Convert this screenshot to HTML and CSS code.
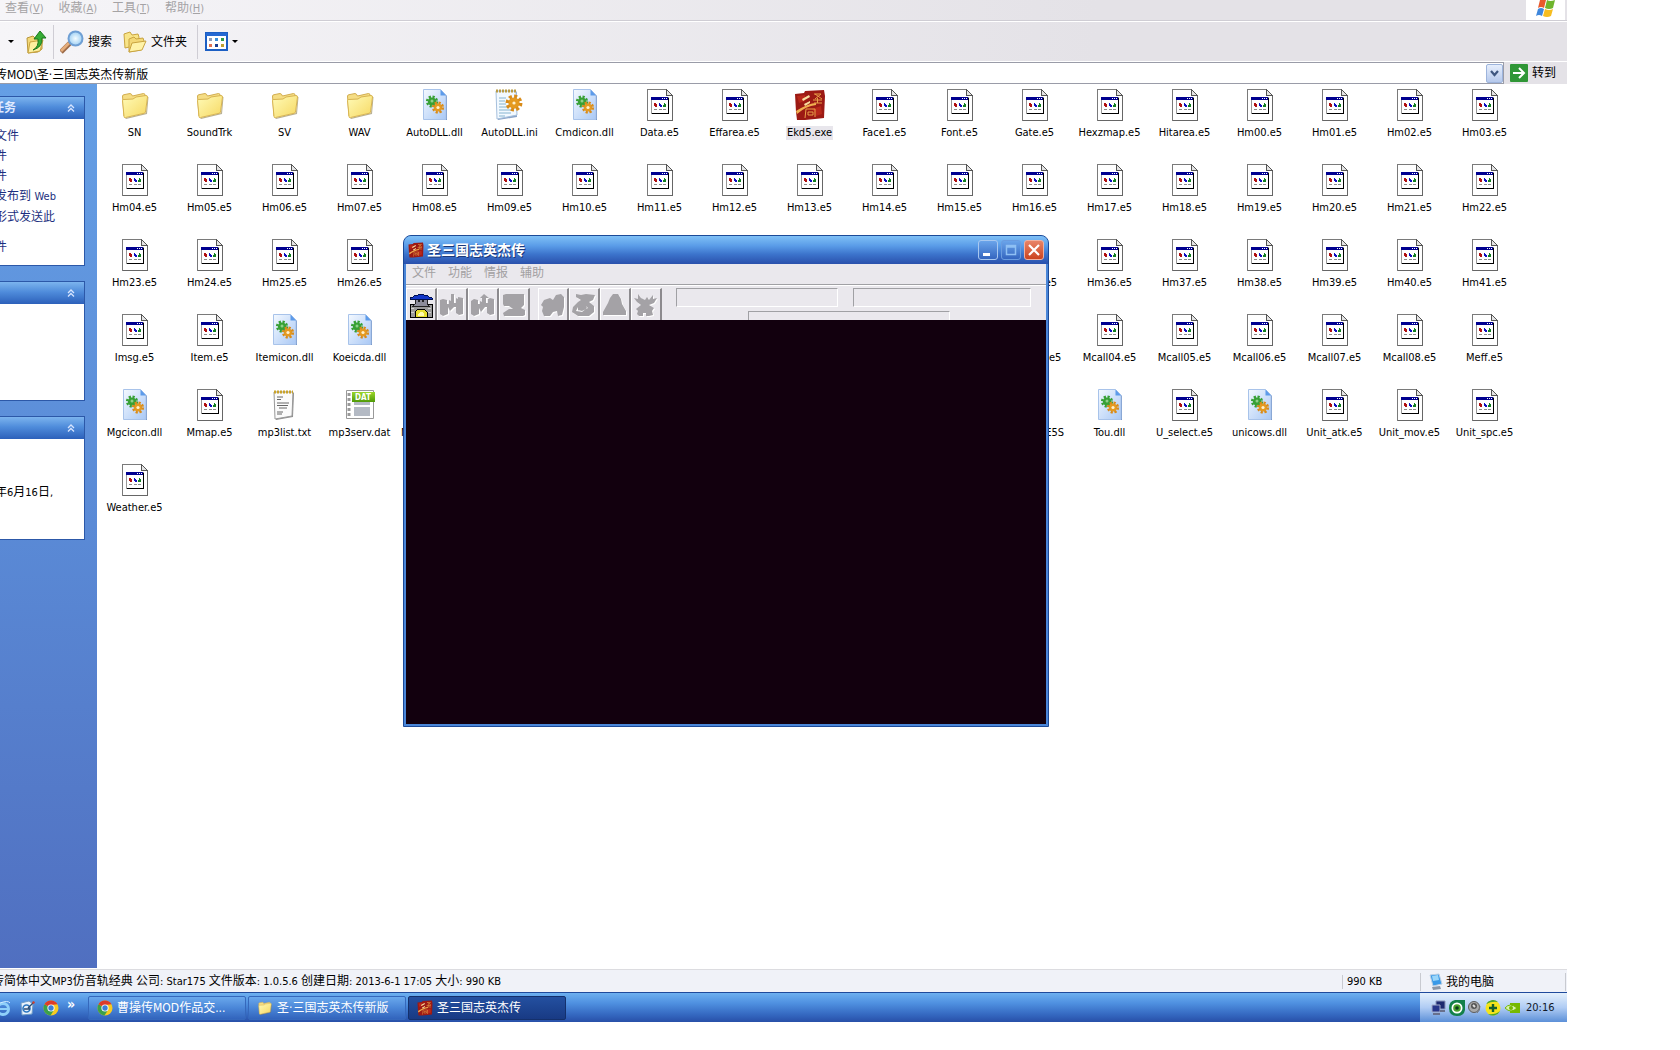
FILE: index.html
```html
<!DOCTYPE html>
<html lang="zh-CN">

<head>
    <meta charset="UTF-8">
    <title>圣·三国志英杰传新版</title>
    <link rel="stylesheet" href="styles.css">
</head>
<body>
<svg class="sprite" aria-hidden="true">
    <defs>
        <linearGradient id="gFolder" x1="0" y1="0" x2="1" y2="1">
            <stop offset="0" stop-color="#fffbb8"/><stop offset="1" stop-color="#f6d862"/>
        </linearGradient>
        <linearGradient id="gDll" x1="0" y1="0" x2="1" y2="1">
            <stop offset="0" stop-color="#f4f9ff"/><stop offset="1" stop-color="#a9c8f5"/>
        </linearGradient>
        <linearGradient id="gDat" x1="0" y1="0" x2="0" y2="1">
            <stop offset="0" stop-color="#9ad62c"/><stop offset="1" stop-color="#4f9a08"/>
        </linearGradient>
        <radialGradient id="gGlass">
            <stop offset="0" stop-color="#f4fcff"/><stop offset="1" stop-color="#9fd0f4"/>
        </radialGradient>
    </defs>
    <symbol id="i-folder" viewBox="0 0 32 32">
        <path d="M6 29l21-5 1.500-16 1 0-1.500 17-21 5z" fill="#8a7b4a" opacity=".6"/>
        <path d="M3.500 7q0-1 1.500-1.300l6-1.200q1.500 0 2.500 2.500l11-2.500q1.500 0 1.500 1.500l1 3-22 18z" fill="#f5dd84" stroke="#d2ad50"/>
        <path d="M3.500 11.500q0-1 1.500-1l9-0.500 3-2 10-1.500q1.500 0 1.500 1.500l-2 15q0 1-1.500 1.300L6.500 28.500q-1.500 0.500-1.500-1z" fill="url(#gFolder)" stroke="#d8b450"/>
    </symbol>
    <symbol id="i-e5" viewBox="0 0 32 32" shape-rendering="crispEdges">
        <path d="M3.500 0.500h19l6 6v25h-25z" fill="#fff" stroke="#7a7a7a"/>
        <path d="M28 7v24H4" fill="none" stroke="#666"/>
        <path d="M22.500 0.500v6h6z" fill="#e4e4e4" stroke="#555"/>
        <path d="M7 8h17v16H7z" fill="#fff" stroke="#999"/>
        <path d="M7 8h17v3H7z" fill="#000090"/>
        <path d="M18 9h1v1h-1zM20 9h1v1h-1zM22 9h1v1h-1z" fill="#fff"/>
        <path d="M24 9h1v16H8v-1h16z" fill="#000"/>
        <path d="M10 14h2v1h1v3h-2v-1h-1z" fill="#b01010"/>
        <path d="M15 14h1v1h1v1h1v2h-2v-1h-1z" fill="#1010c0"/>
        <path d="M20 14h1v1h1v3h-3v-2h1z" fill="#108020"/>
        <path d="M10 20h3v1h-3zM15 20h3v1h-3zM19 20h3v1h-3z" fill="#8a8a8a"/>
    </symbol>
    <symbol id="i-gear" viewBox="-8 -8 16 16">
        <circle r="5"/>
        <circle r="6" fill="none" stroke="currentColor" stroke-width="3" stroke-dasharray="2.700 2"/>
    </symbol>
    <symbol id="i-dll" viewBox="0 0 32 32">
        <path d="M5 1h17l6 6v24H5z" fill="#6c8cc0"/>
        <path d="M4.500 0.500h17l5.500 6v24h-22.500z" fill="url(#gDll)" stroke="#a8c3ea"/>
        <path d="M21.500 0.500v6h5.500z" fill="#5d9bea"/>
        <use href="#i-gear" x="6" y="6" width="14" height="13" fill="#37a035" color="#37a035"/>
        <circle cx="13" cy="12" r="1.500" fill="#8fd088"/>
        <use href="#i-gear" x="12" y="12" width="14" height="13" fill="#e59a20" color="#d98b18"/>
        <circle cx="19" cy="18.500" r="1.600" fill="#fff1cc"/>
    </symbol>
    <symbol id="i-txt" viewBox="0 0 32 32">
        <path d="M6 4h19l-1 24-17 3z" fill="#909090"/>
        <path d="M5 3h19l-1 24-17 3z" fill="#fbfbfb" stroke="#999"/>
        <path d="M5 3h19" stroke="#caa32a" stroke-width="3" stroke-dasharray="2 1"/>
        <path d="M8 8h6M8 10.500h4M8 14h12M8 16.500h11M10 19h8M8 23h6M8 25h5" stroke="#666" fill="none"/>
    </symbol>
    <symbol id="i-ini" viewBox="0 0 32 32">
        <path d="M3 3h20v25l-19 3z" fill="#8ba4c8"/>
        <path d="M2 2h20l1 24-20 4z" fill="#f2f9ff" stroke="#a6c0dd"/>
        <path d="M2 2h20" stroke="#b99b45" stroke-width="3" stroke-dasharray="2 1"/>
        <path d="M5 9h7M5 12h6M5 15h7M5 18h9M5 21h14M5 24h12M5 27h6" stroke="#86b4d0" fill="none"/>
        <use href="#i-gear" x="11" y="5" width="18" height="18" fill="#e59a20" color="#d98b18"/>
        <circle cx="20" cy="14" r="1.600" fill="#fff1cc"/>
    </symbol>
    <symbol id="i-dat" viewBox="0 0 32 32">
        <path d="M2.500 1.500h27v28h-27z" fill="#fff" stroke="#999"/>
        <path d="M5 4v25" stroke="#999" stroke-width="3" stroke-dasharray="3 2"/>
        <path d="M10 13h16v3H10zM10 18h16v9H10z" fill="#b4bac4"/>
        <path d="M8 3h23v10H8z" fill="url(#gDat)"/>
        <text x="19" y="11" text-anchor="middle" font-family="DejaVu Sans Condensed" font-weight="bold" font-size="8" fill="#fff">DAT</text>
    </symbol>
    <symbol id="i-exe" viewBox="0 0 32 32">
        <path d="M1 5l9-1 1-2 19-1 1 6-1 22-9 1-10 1-8 0-1-8z" fill="#9c1a14"/>
        <path d="M3 7l8-1 0 6-6 2zM18 20l9-3 1 8-6 2z" fill="#b8281a"/>
        <path d="M2 22q13-8 20-8l0 2q-10 1-19 9z" fill="#f0b050"/>
        <path d="M8 10l7-4 1 2-7 4zM10 15l6-3v2l-5 3z" fill="#f8e0a0"/>
        <path d="M20 5h7l-6 5M21 5l7 5M19 11h9M23.500 9v5M20 14h8M12 20l-1 9M12 20h9l0 8M14 23h5v3h-5z" fill="none" stroke="#e8a048" stroke-width="1"/>
    </symbol>
    <symbol id="i-chrome" viewBox="0 0 16 16">
        <circle cx="8" cy="8" r="7.500" fill="#f6cb22"/>
        <path d="M8 8L1.500 4.300A7.500 7.500 0 0 0 7.500 15.500L11 10z" fill="#3aa04b"/>
        <path d="M8 8L1.500 4.300A7.500 7.500 0 0 1 14.500 4.300L8 5z" fill="#dc3b2b"/>
        <circle cx="8" cy="8" r="3.600" fill="#fff"/>
        <circle cx="8" cy="8" r="2.700" fill="#3c7fd6"/>
    </symbol>
    <symbol id="i-chev" viewBox="0 0 8 8">
        <path d="M1 4l3-3 3 3M1 7.500l3-3 3 3" fill="none" stroke="#d6e4ff" stroke-width="1.300"/>
    </symbol>
</svg>

<div class="explorer">
    <nav class="menubar">
        <button class="menu">查看<span class="lat">(<u>V</u>)</span></button>
        <button class="menu">收藏<span class="lat">(<u>A</u>)</span></button>
        <button class="menu">工具<span class="lat">(<u>T</u>)</span></button>
        <button class="menu">帮助<span class="lat">(<u>H</u>)</span></button>
        <div class="flag">
            <svg width="20" height="18" viewBox="0 0 20 18">
                <path d="M4 0q3-2 6 0L8 8q-3-2-6 0z" fill="#e8592b"/>
                <path d="M11 0q3 2 8 0l-2 8q-4 2-8 0z" fill="#6fb52c"/>
                <path d="M2 9q3-2 6 0l-2 7q-3-2-6 0z" fill="#3f87dc"/>
                <path d="M9 9q4 2 8 0l-2 7q-4 2-8 0z" fill="#f6bd20"/>
            </svg>
        </div>
    </nav>

    <div class="toolbar">
        <button class="tool drop" aria-label="前进"><i class="tri"></i></button>
        <button class="tool up" aria-label="向上">
            <svg width="21" height="24" viewBox="0 0 21 24">
                <path d="M1 8l6-2 2 2 7-1v12l-4 3-10 1z" fill="#f3d877" stroke="#b8963a"/>
                <path d="M4 12l13-2-3 11-12 2z" fill="#fdf0a0" stroke="#c9a440"/>
                <path d="M7 20q6-3 5-11H8l6-8 6 7h-4q1 9-9 12z" fill="#36ad35" stroke="#1b761c"/>
            </svg>
        </button>
        <button class="tool search">
            <svg width="24" height="24" viewBox="0 0 24 24">
                <path d="M1 22l9-9" stroke="#9c6a48" stroke-width="5"/>
                <path d="M1 21l8-8" stroke="#e5ad7c" stroke-width="3"/>
                <circle cx="15.500" cy="8.500" r="7" fill="url(#gGlass)" stroke="#6f9fd4" stroke-width="2"/>
            </svg>
            搜索
        </button>
        <button class="tool folders">
            <svg width="24" height="22" viewBox="0 0 24 22">
                <path d="M1 3l6-2 2 3 6-1 1 3-1 8-13 3z" fill="#f8e488" stroke="#c9a440"/>
                <path d="M6 8l5-2 2 2 7-1 1 3-3 9-12 2z" fill="#f3d877" stroke="#c9a440"/>
                <path d="M9 12l14-2-4 9-13 2z" fill="#fff3a8" stroke="#c9a440"/>
            </svg>
            文件夹
        </button>
        <button class="tool views" aria-label="查看">
            <svg width="23" height="19" viewBox="0 0 23 19" shape-rendering="crispEdges">
                <path d="M1 1h21v17H1z" fill="#fff" stroke="#1c5fc4" stroke-width="2"/>
                <path d="M1 1h21v3H1z" fill="#2468d2"/>
                <path d="M4 6h3v3H4z" fill="#8c9ab8"/><path d="M10 6h3v3h-3z" fill="#3b8fd8"/><path d="M16 6h3v3h-3z" fill="#2f9a48"/>
                <path d="M4 12h3v3H4z" fill="#e07050"/><path d="M10 12h3v3h-3z" fill="#1c3e90"/><path d="M16 12h3v3h-3z" fill="#c0a030"/>
            </svg>
            <i class="tri"></i>
        </button>
    </div>

    <form class="address">
        <div class="combo">
            <input type="text" aria-label="地址" value="传MOD\圣·三国志英杰传新版">
            <button type="button" class="combo-btn" aria-label="展开">
                <svg width="9" height="7" viewBox="0 0 9 7"><path d="M1 1l3.500 4L8 1" fill="none" stroke="#3f5780" stroke-width="2.200"/></svg>
            </button>
        </div>
        <button type="button" class="go">
            <svg width="18" height="18" viewBox="0 0 18 18">
                <rect width="18" height="18" rx="1" fill="#2f9636"/>
                <path d="M3 9h11M9 4l5 5-5 5" fill="none" stroke="#fff" stroke-width="2"/>
            </svg>
            转到
        </button>
    </form>

    <div class="main">
        <aside class="side">
            <section class="panel tasks">
                <h2>任务<svg width="8" height="8"><use href="#i-chev"/></svg></h2>
                <div class="panel-body">
                    <a href="#">文件</a>
                    <a href="#">件</a>
                    <a href="#">件</a>
                    <a href="#">发布到 <span class="lat">Web</span></a>
                    <a href="#" class="two">形式发送此</a>
                    <a href="#">件</a>
                </div>
            </section>
            <section class="panel places">
                <h2><svg width="8" height="8"><use href="#i-chev"/></svg></h2>
                <div class="panel-body"></div>
            </section>
            <section class="panel details">
                <h2><svg width="8" height="8"><use href="#i-chev"/></svg></h2>
                <div class="panel-body"><p>年<span class="lat">6</span>月<span class="lat">16</span>日<span class="lat">,</span></p></div>
            </section>
        </aside>
        <div class="files" id="files"></div>
    </div>

    <footer class="status">
        <p class="info">传简体中文<span class="lat">MP3</span>仿音轨经典<span class="lat"> </span>公司<span class="lat">: Star175 </span>文件版本<span class="lat">: 1.0.5.6 </span>创建日期<span class="lat">: 2013-6-1 17:05 </span>大小<span class="lat">: 990 KB</span></p>
        <p class="size">990 KB</p>
        <p class="zone">
            <svg width="14" height="18" viewBox="0 0 14 18">
                <path d="M1 2l9-1 3 10-9 2z" fill="#3a9ae8" stroke="#bcd0e4"/>
                <path d="M3 3l6-1 1 5-6 1z" fill="#9ad6fa"/>
                <path d="M3 14l8-1 1 3-8 1z" fill="#8d97a6"/>
            </svg>
            我的电脑
        </p>
    </footer>
</div>

<div class="taskbar">
    <div class="quick">
        <svg class="ie" width="11" height="16" viewBox="5 0 11 16">
            <circle cx="8" cy="9" r="5.500" fill="none" stroke="#8fd0fa" stroke-width="3"/>
            <path d="M3 9h10" stroke="#8fd0fa" stroke-width="2"/>
            <path d="M5 3q8-3 10 0" stroke="#cfeaff" fill="none"/>
        </svg>
        <svg width="16" height="16" viewBox="0 0 16 16">
            <path d="M2 3l8-2 4 3-1 10-10 1z" fill="#e8f2fb" stroke="#6f9cc8"/>
            <circle cx="7.500" cy="8.500" r="3.500" fill="none" stroke="#2c76c0" stroke-width="1.600"/>
            <path d="M5 9h6M9 8l6-6" stroke="#2c4a70" stroke-width="1.400"/>
            <path d="M13 2l2-1 1 2-2 1z" fill="#d04030"/>
        </svg>
        <svg width="16" height="16"><use href="#i-chrome"/></svg>
        <button class="more">»</button>
    </div>
    <button class="task"><svg width="16" height="16"><use href="#i-chrome"/></svg>曹操传MOD作品交...</button>
    <button class="task"><svg width="16" height="16"><use href="#i-folder"/></svg>圣·三国志英杰传新版</button>
    <button class="task active"><svg width="16" height="16"><use href="#i-exe"/></svg>圣三国志英杰传</button>
    <div class="tray">
        <svg width="15" height="16" viewBox="0 0 15 16">
            <path d="M5 1h9v8H5z" fill="#1d2a70" stroke="#8a94b8"/>
            <path d="M1 5h8v7H1z" fill="#27368a" stroke="#a4acc8"/>
            <path d="M2 14h7M9 11h5" stroke="#68708c" stroke-width="2"/>
        </svg>
        <svg width="16" height="16" viewBox="0 0 16 16">
            <path d="M6 0h10v10q-1 6-8 6-8 0-8-8 0-7 6-8z" fill="#13804a"/>
            <circle cx="8" cy="8" r="5.500" fill="#fff"/>
            <circle cx="8" cy="8" r="3.800" fill="#4aa12c"/>
            <circle cx="8" cy="8" r="1.800" fill="#0c3c1c"/>
        </svg>
        <svg width="14" height="16" viewBox="0 0 14 16">
            <circle cx="6" cy="7" r="5.500" fill="#a9a9a9" stroke="#5c5c5c"/>
            <circle cx="6" cy="6" r="3" fill="#555"/>
            <path d="M5 5l2 2" stroke="#ddd" stroke-width="2"/>
            <path d="M9 13q3-2 3-7" stroke="#777" fill="none"/>
        </svg>
        <svg width="16" height="16" viewBox="0 0 16 16">
            <circle cx="8" cy="8" r="7.500" fill="#f4e41c"/>
            <path d="M1 4A8 8 0 0 1 13 2Q7 1 1 4zM3 14A8 8 0 0 0 15 11Q10 15 3 14z" fill="#4aa52c"/>
            <path d="M8 4v8M4 8h8" stroke="#14602c" stroke-width="2.400"/>
        </svg>
        <svg width="16" height="12" viewBox="0 0 16 12">
            <path d="M6 1h10v10H6z" fill="#76b900"/>
            <path d="M1 6q5-6 12 0-6 6-12 0z" fill="#d8f0b0" stroke="#76b900"/>
            <circle cx="7" cy="6" r="2" fill="#76b900"/>
        </svg>
        <time>20:16</time>
    </div>
</div>

<div class="game">
    <header class="titlebar">
        <svg width="16" height="16"><use href="#i-exe"/></svg>
        <h1>圣三国志英杰传</h1>
        <button class="cap min" aria-label="最小化"><svg width="18" height="18"><path d="M4 12h7v3H4z" fill="#fff"/></svg></button>
        <button class="cap max" aria-label="最大化"><svg width="18" height="18"><path d="M4.500 4.500h9v9h-9zM4 6h10" fill="none" stroke="#8fc0f4" stroke-width="1.500"/></svg></button>
        <button class="cap close" aria-label="关闭"><svg width="18" height="18"><path d="M4 4l10 10M14 4L4 14" stroke="#fff" stroke-width="2.200"/></svg></button>
    </header>
    <nav class="game-menu">
        <button>文件</button>
        <button>功能</button>
        <button>情报</button>
        <button>辅助</button>
    </nav>
    <div class="game-bar">
        <div class="tiles">
            <button class="tile" aria-label="城">
                <svg width="24" height="26" viewBox="0 0 24 26" shape-rendering="crispEdges">
                    <path d="M1 12h4v2h14v-2h4v13H1z" fill="#9a9a9a" stroke="#000"/>
                    <path d="M6 7h12v5l2 2H4l2-2z" fill="#8c8c9a" stroke="#222"/>
                    <path d="M9 8h2v2H9zM13 8h2v2h-2z" fill="#222"/>
                    <path d="M1 6l3-1 2-2h3l1-1h4l1 1h3l2 2 3 1v1H1z" fill="#1236c8" stroke="#001050"/>
                    <path d="M6 25v-5l3-3h6l3 3v5z" fill="#e8e030" stroke="#000"/>
                    <path d="M9 22l2-2h2l2 2v2H9z" fill="#fffbb0"/>
                    <path d="M2 16h3M2 20h3M19 16h3M19 20h3" stroke="#d0d0d0"/>
                </svg>
            </button>
            <button class="tile" aria-label="读取">
                <svg class="dim" width="24" height="24" viewBox="0 0 24 24"><path d="M0 7l3-1 4 1v4h2V7l2 1V1h3v9h2V5l2 1V4l5 1v16l-4 1-3-2v-6h-2l-4 4-2-4H8v7l-5 2-3-2z"/></svg>
            </button>
            <button class="tile" aria-label="保存">
                <svg class="dim" width="24" height="24" viewBox="0 0 24 24"><path d="M0 8l3-2 4 1v4h2V8l2 1V5H9l4-4 5 4h-3v5h2V6l2-1 4 1v15l-4 1-3-2v-6h-2l-4 5-2-4H8v6l-5 2-3-2z"/></svg>
            </button>
            <button class="tile" aria-label="设定">
                <svg class="dim" width="24" height="24" viewBox="0 0 24 24"><path d="M1 2l3-1h18v11l-3 3 4 2v5l-2 1H2l-1-3 6-4h4l-4-3H2l-1-2z"/></svg>
            </button>
            <button class="tile second" aria-label="部队">
                <svg class="dim" width="24" height="24" viewBox="0 0 24 24"><path d="M0 12l3-5 6-2 3 2 3-5 5-1 3 3v10l-2 8-4 1-1-5-4 1-3 4H3l-2-5 1-4z"/></svg>
            </button>
            <button class="tile" aria-label="宝物">
                <svg class="dim" width="24" height="24" viewBox="0 0 24 24"><path fill-rule="evenodd" d="M4 1l5 1 5-1 9 1-2 5-4 2 5 4v6l-5 4H6l-6-4 1-5 5-5 3-2-5-3zM6 14l-2 4 6 1 5-4-1-2 2 2-6 3-4-1z"/></svg>
            </button>
            <button class="tile" aria-label="地形">
                <svg class="dim" width="24" height="24" viewBox="0 0 24 24"><path d="M10 1h5l3 5 1 5 4 7v4H0v-3l5-9 2-5z"/></svg>
            </button>
            <button class="tile" aria-label="武将">
                <svg class="dim" width="24" height="24" viewBox="0 0 24 24"><path d="M0 5l4 1V1l3 4 4 2 2-3 2 3 4-5v4l4-1-3 5-5 2 5 3-2 3 1 4-4 1h-3v-3h-3v3H5l-2-2 1-3-2-2 5-4-4-3z"/></svg>
            </button>
        </div>
        <div class="slots">
            <div class="slot-row"><div class="slot a"></div><div class="slot b"></div></div>
            <div class="slot c"></div>
        </div>
    </div>
    <div class="stage"></div>
</div>

<script src="files.js"></script>
</body>

</html>
```

FILE: styles.css
```css
*{
    box-sizing: border-box;
}
body{
    margin: 0;
    height: 100vh;
    padding: 0 113px 28px 0;
    display: flex;
    flex-direction: column;
    position: relative;
    overflow: hidden;
    background-color: #fff;
    color: #000;
    font-family: "DejaVu Sans Condensed", "Noto Sans CJK SC", sans-serif;
    font-size: 12px;
    line-height: 14px;
}
h1, h2, p{
    margin: 0;
}
button, input{
    font: inherit;
    color: inherit;
    border: 0;
    padding: 0;
    margin: 0;
    background: none;
}
svg{
    display: block;
    flex: none;
}
a{
    color: #1c2f80;
    text-decoration: none;
}
.lat{
    font-size: 11px;
}
.sprite{
    position: absolute;
    width: 0;
    height: 0;
}
.explorer{
    flex: 1;
    min-height: 0;
    display: flex;
    flex-direction: column;
}

/* menu, toolbar, address */
.menubar{
    display: flex;
    align-items: center;
    gap: 15px;
    height: 21px;
    padding: 0 2px 3px 5px;
    position: relative;
    background: linear-gradient(90deg, #f6f5f8, #e4e2e7 70%);
    border-bottom: 1px solid #cfcdd4;
    color: #a5a3a5;
    white-space: nowrap;
}
.flag{
    position: absolute;
    top: 0;
    right: 2px;
    width: 39px;
    height: 20px;
    display: flex;
    justify-content: center;
    background-color: #fff;
}
.toolbar{
    display: flex;
    align-items: center;
    height: 41px;
    border-top: 1px solid #fff;
    border-bottom: 1px solid #fff;
    background: linear-gradient(90deg, #f6f5f8, #e4e2e7 70%);
}
.tool{
    display: flex;
    align-items: center;
    gap: 4px;
    height: 34px;
}
.tri{
    border: 3px solid transparent;
    border-top-color: #000;
    border-bottom: 0;
}
.drop{
    padding-left: 8px;
}
.up{
    padding: 0 6px 0 12px;
    border-right: 1px solid #cfcdd4;
}
.search{
    padding: 0 11px 0 6px;
}
.folders{
    padding-right: 10px;
    border-right: 1px solid #cfcdd4;
}
.views{
    padding-left: 7px;
}
.address{
    display: flex;
    height: 22px;
    background-color: #e4e2e7;
}
.combo{
    flex: 1;
    display: flex;
    align-items: center;
    border: 1px solid #9a9ca8;
    border-left: 0;
    background-color: #fff;
}
.combo input{
    flex: 1;
    height: 20px;
    text-indent: -5px;
    outline: 0;
}
.combo-btn{
    width: 17px;
    height: 19px;
    display: flex;
    align-items: center;
    justify-content: center;
    border: 1px solid #9db4dc;
    border-radius: 2px;
    background: linear-gradient(#e6eefc, #b6c9ec);
}
.go{
    display: flex;
    align-items: center;
    gap: 4px;
    padding: 0 11px 0 6px;
}

/* side panels */
.main{
    flex: 1;
    min-height: 0;
    display: flex;
}
.side{
    width: 97px;
    margin-bottom: 1px;
    padding: 12px 12px 0 0;
    display: flex;
    flex-direction: column;
    gap: 15px;
    background: linear-gradient(#659fe5, #5a8ad6 50%, #506fc0);
}
.panel{
    border: 1px solid #2c58a8;
    border-left: 0;
    background-color: #fff;
    white-space: nowrap;
    overflow: hidden;
}
.panel h2{
    display: flex;
    align-items: center;
    height: 22px;
    padding-right: 9px;
    background: linear-gradient(#7cb4ee, #4f8cdb 45%, #2c60ba);
    color: #e0ebff;
    font-size: 12px;
    text-indent: -8px;
}
.panel h2 svg{
    margin-left: auto;
}
.panel-body{
    text-indent: -5px;
}
.tasks .panel-body{
    height: 146px;
    padding-top: 7px;
}
.places .panel-body{
    height: 96px;
}
.details .panel-body{
    height: 100px;
    padding-top: 46px;
}
.panel a{
    display: block;
    line-height: 20px;
}
.panel .two{
    padding-bottom: 10px;
}

/* icon grid */
.files{
    flex: 1;
    display: grid;
    grid-template-columns: repeat(auto-fill, 75px);
    grid-auto-rows: 75px;
    align-content: start;
    padding-top: 5px;
}
.file{
    display: flex;
    flex-direction: column;
    align-items: center;
    gap: 5px;
    font-size: 11px;
    white-space: nowrap;
}
.file svg{
    margin-left: 1px;
}
.file span{
    padding: 0 1px;
}
.file.selected span{
    background-color: #e8e6ec;
}

/* status bar */
.status{
    display: flex;
    align-items: center;
    height: 23px;
    padding-top: 1px;
    border-top: 1px solid #dcdce0;
    background-color: #f0f2f8;
    white-space: nowrap;
}
.info{
    flex: 1;
    text-indent: -8px;
}
.size{
    width: 78px;
    padding-left: 4px;
    border-left: 1px solid #c8cad0;
    font-size: 11px;
}
.zone{
    width: 146px;
    margin-right: 1px;
    display: flex;
    align-items: center;
    gap: 3px;
    padding-left: 8px;
    border: 1px solid #c8cad0;
    border-width: 0 1px;
}

/* taskbar */
.taskbar{
    display: flex;
    align-items: center;
    gap: 2px;
    height: 30px;
    border-top: 1px solid #1f4a9c;
    background: linear-gradient(#6db0f0, #4f90e0 35%, #3468c0 75%, #284fa8);
    color: #fff;
    white-space: nowrap;
}
.quick{
    width: 86px;
    display: flex;
    align-items: center;
    gap: 8px;
}
.more{
    align-self: flex-start;
    font-weight: bold;
    line-height: 8px;
    font-size: 14px;
}
.task{
    width: 158px;
    height: 24px;
    display: flex;
    align-items: center;
    gap: 4px;
    padding-left: 8px;
    border: 1px solid #3568bc;
    border-radius: 2px;
    background: linear-gradient(#6aa8ec, #4a86d8 50%, #3264bc);
}
.task.active{
    border-color: #14306c;
    background: linear-gradient(#2450a0, #183a84);
}
.tray{
    width: 147px;
    height: 29px;
    margin-left: auto;
    display: flex;
    align-items: center;
    gap: 3px;
    padding-left: 11px;
    background: linear-gradient(#e4f0fc, #b0ccf4 50%, #5c90d8);
    color: #101828;
}
.tray time{
    padding-left: 3px;
    font-size: 11px;
}

/* game window */
.game{
    position: absolute;
    left: 403px;
    top: 235px;
    width: 646px;
    height: 492px;
    display: flex;
    flex-direction: column;
    border: 1px solid #1c4a98;
    border-radius: 8px 8px 0 0;
    background-color: #4a86d8;
    overflow: hidden;
}
.titlebar{
    display: flex;
    align-items: center;
    gap: 3px;
    height: 28px;
    padding: 0 4px;
    background: linear-gradient(#7fc0f6, #5a9ce8 35%, #3c74cc 65%, #2a50ac);
    color: #fff;
}
.titlebar h1{
    flex: 1;
    font-size: 14px;
    text-shadow: 1px 1px 0 #1c3878;
}
.cap{
    width: 20px;
    height: 20px;
    border: 1px solid #a8c8f0;
    border-radius: 3px;
    background: linear-gradient(#6aa4ea, #3466c0);
}
.cap.max{
    border-color: #6a9ce0;
}
.cap.close{
    border-color: #f0b0a0;
    background: linear-gradient(#e88468, #cc4420);
}
.game-menu{
    display: flex;
    gap: 12px;
    height: 21px;
    margin: 0 2px;
    padding: 0 6px 2px;
    border-bottom: 1px solid #a0a0a4;
    background-color: #eae8ed;
    color: #a2a0a2;
    text-shadow: 1px 1px 0 #fff;
}
.game-bar{
    display: flex;
    height: 35px;
    margin: 0 2px;
    padding-top: 2px;
    border-top: 1px solid #fff;
    background-color: #eae8ed;
}
.tiles{
    display: flex;
}
.tile{
    width: 31px;
    display: flex;
    align-items: center;
    justify-content: center;
    border: 1px solid #fff;
    border-right: 2px solid #8c8a8e;
    border-bottom: 0;
}
.tile.second{
    margin-left: 8px;
}
.dim{
    fill: #a4a2a6;
    filter: drop-shadow(1px 1px 0 #fff);
}
.slots{
    flex: 1;
    display: flex;
    flex-direction: column;
    gap: 4px;
    padding: 0 15px 0 14px;
}
.slot-row{
    display: flex;
    gap: 15px;
}
.slot{
    height: 19px;
    border: 1px solid #fff;
    border-top-color: #a0a0a4;
    border-left-color: #a0a0a4;
}
.slot.a{
    flex: 10;
}
.slot.b{
    flex: 11;
}
.slot.c{
    width: 202px;
    flex: 1;
    margin-left: 72px;
    border-bottom: 0;
}
.stage{
    flex: 1;
    margin: 0 2px 2px;
    background-color: #12000e;
}
```

FILE: files.js
```js
var names = [
    'SN', 'SoundTrk', 'SV', 'WAV', 'AutoDLL.dll', 'AutoDLL.ini', 'Cmdicon.dll', 'Data.e5', 'Effarea.e5', 'Ekd5.exe',
    'Face1.e5', 'Font.e5', 'Gate.e5', 'Hexzmap.e5', 'Hitarea.e5'
];
for (var i = 0; i <= 41; i++) {
    names.push('Hm' + String(i).padStart(2, '0') + '.e5');
}
names.push('Imsg.e5', 'Item.e5', 'Itemicon.dll', 'Koeicda.dll', 'Logo.e5', 'Mark.e5', 'Mark2.e5', 'Mcall.e5', 'Mcall00.e5');
names.push('Mcallx.e5', 'Mcall01.e5', 'Mcall02.e5', 'Mcall03.e5', 'Mcall04.e5', 'Mcall05.e5', 'Mcall06.e5', 'Mcall07.e5', 'Mcall08.e5', 'Meff.e5');
names.push('Mgcicon.dll', 'Mmap.e5', 'mp3list.txt', 'mp3serv.dat', 'MP3Server.dll', 'Pmapobj.e5', 'R_00.e5', 'S_00.e5', 'Select.e5');
names.push('Star.e5', 'Sv00.e5', 'Sv01.e5', 'Sv0000.E5S', 'Tou.dll', 'U_select.e5', 'unicows.dll', 'Unit_atk.e5', 'Unit_mov.e5', 'Unit_spc.e5', 'Weather.e5');

document.getElementById('files').innerHTML = names.map(function (name) {
    var ext = name.indexOf('.') < 0 ? 'folder' : name.split('.')[1].toLowerCase();
    if (ext === 'e5s') ext = 'e5';
    var cls = name === 'Ekd5.exe' ? 'file selected' : 'file';
    return '<div class="' + cls + '"><svg width="32" height="32"><use href="#i-' + ext + '"/></svg><span>' + name + '</span></div>';
}).join('');
```
